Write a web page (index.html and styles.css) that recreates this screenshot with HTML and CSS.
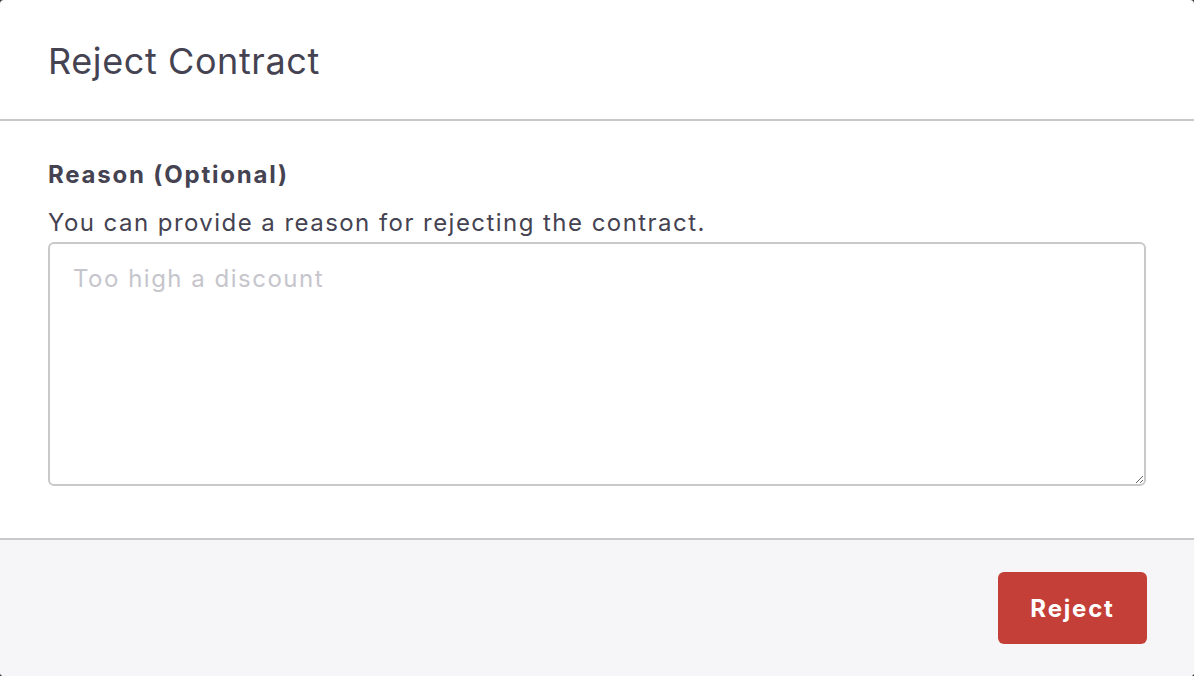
FILE: index.html
```html
<!DOCTYPE html>
<html lang="en">
<head>
<meta charset="utf-8">
<title>Reject Contract</title>
<link rel="stylesheet" href="styles.css">
</head>
<body>
<div class="dialog">
  <header class="dialog-header">
    <h1 class="dialog-title">Reject Contract</h1>
  </header>
  <section class="dialog-body">
    <label class="field-label" for="reason">Reason (Optional)</label>
    <p class="field-help">You can provide a reason for rejecting the contract.</p>
    <textarea id="reason" class="field-input" placeholder="Too high a discount"></textarea>
  </section>
  <footer class="dialog-footer">
    <button class="btn-reject" type="button">Reject</button>
  </footer>
</div>
</body>
</html>
```
FILE: styles.css
```css
html, body {
  margin: 0;
  padding: 0;
  background: #3a3a3a;
}
body {
  font-family: Inter, "Noto Sans", sans-serif;
  color: #454352;
}
.dialog {
  width: 1194px;
  height: 676px;
  background: #ffffff;
  border-radius: 4px;
  overflow: hidden;
  display: flex;
  flex-direction: column;
}
.dialog-header {
  padding: 37px 48px 34px;
  border-bottom: 2px solid #c9c9cb;
}
.dialog-title {
  margin: 0;
  font-size: 36px;
  line-height: 48px;
  font-weight: 400;
  letter-spacing: 0.6px;
  color: #454352;
}
.dialog-body {
  padding: 36px 48px 52px;
  display: flex;
  flex-direction: column;
}
.field-label {
  font-size: 24px;
  line-height: 36px;
  font-weight: 700;
  letter-spacing: 1.8px;
}
.field-help {
  margin: 12px 0 1px;
  font-size: 24px;
  line-height: 36px;
  letter-spacing: 1.45px;
}
.field-input {
  box-sizing: border-box;
  height: 244px;
  width: 100%;
  margin: 0;
  padding: 17px 23px;
  border: 2px solid #c9c9cb;
  border-radius: 6px;
  font-family: inherit;
  font-size: 24px;
  line-height: 36px;
  letter-spacing: 1.5px;
  color: #454352;
  resize: vertical;
  background: #fff;
}
.field-input::placeholder {
  color: #c6c5cc;
}
.dialog-footer {
  flex: 1;
  background: #f6f6f8;
  border-top: 2px solid #c9c9cb;
  padding: 32px 47px;
  display: flex;
  justify-content: flex-end;
  align-items: flex-start;
}
.btn-reject {
  width: 149px;
  height: 72px;
  border: none;
  border-radius: 6px;
  background: #c43f38;
  color: #ffffff;
  font-family: inherit;
  font-size: 24px;
  font-weight: 700;
  letter-spacing: 1.8px;
}
```
